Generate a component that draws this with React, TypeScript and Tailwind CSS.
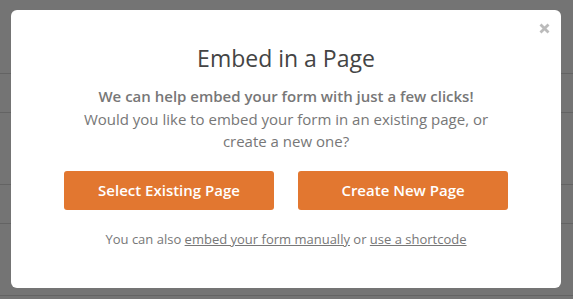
import React from "react";

export default function App() {
  const font = { fontFamily: '"Open Sans", "Noto Sans", sans-serif' };
  return (
    <div className="relative h-[299px] w-full overflow-hidden bg-[#747474]" style={font}>
      <div className="flex flex-col">
        <div className="h-[74px] border-b border-[#636363]" />
        <div className="h-[39px] border-b border-[#636363]" />
        <div className="h-[72px] border-b border-[#636363]" />
        <div className="h-[39px] border-b border-[#636363]" />
        <div className="h-[72px] border-b border-[#636363]" />
      </div>

      <div className="absolute left-[11px] top-[10px] h-[278px] w-[550px] rounded-[6px] bg-white">
        <button className="absolute right-[11px] top-[13px] flex h-[11px] w-[11px] items-center justify-center">
          <svg width="11" height="11" viewBox="0 0 11 11">
            <path d="M1.5 1.5 L9.5 9.5 M9.5 1.5 L1.5 9.5" stroke="#bbbbbb" strokeWidth="2.8" strokeLinecap="butt" />
          </svg>
        </button>
        <div className="flex flex-col items-center pt-[32px]">
          <h2 className="text-[23px] font-medium leading-[32px] text-[#444444]">Embed in a Page</h2>
          <div className="mt-[11px] text-center text-[15px] leading-[22.5px] text-[#777777]">
            <p className="font-semibold">We can help embed your form with just a few clicks!</p>
            <p>
              Would you like to embed your form in an existing page, or
              <br />
              create a new one?
            </p>
          </div>
          <div className="mt-[18px] flex gap-[24px]">
            <button className="h-[39px] w-[210px] rounded-[3px] bg-[#e27730] text-[15px] font-semibold text-white">
              Select Existing Page
            </button>
            <button className="h-[39px] w-[210px] rounded-[3px] bg-[#e27730] text-[15px] font-semibold text-white">
              Create New Page
            </button>
          </div>
          <p className="mt-[19px] text-[13px] leading-[20px] text-[#777777]">
            You can also <a className="underline">embed your form manually</a> or{" "}
            <a className="underline">use a shortcode</a>
          </p>
        </div>
      </div>
    </div>
  );
}
